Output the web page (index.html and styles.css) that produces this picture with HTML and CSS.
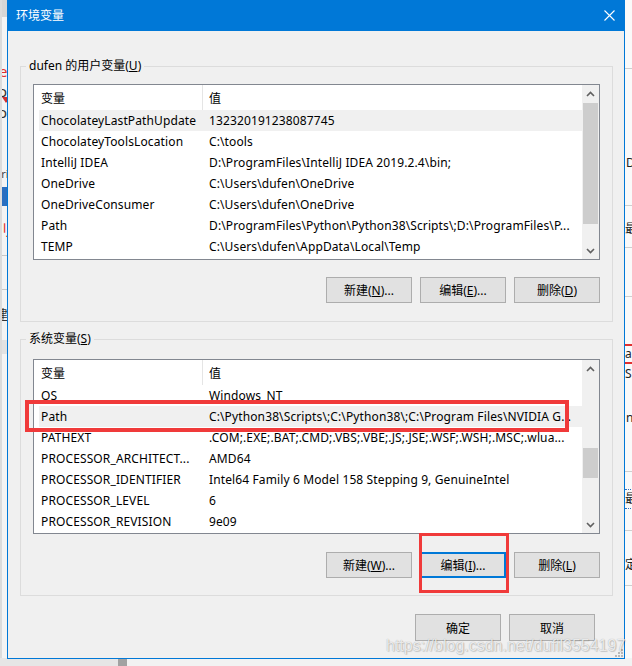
FILE: index.html
```html
<!DOCTYPE html>
<html lang="zh-CN">
<head>
<meta charset="utf-8">
<title>环境变量</title>
<link rel="stylesheet" href="styles.css">
</head>
<body>
<div class="desktop">
  <div class="bg-left">
    <span class="bl bl-top"></span>
    <span class="bl bl-e">e</span>
    <span class="bl bl-o1">o</span>
    <span class="bl bl-tri"></span>
    <span class="bl bl-o2">o</span>
    <span class="bl bl-cri">cri</span>
    <span class="bl bl-blue"></span>
    <span class="bl bl-red">刂</span>
    <span class="bl bl-line1"></span>
    <span class="bl bl-line2"></span>
    <span class="bl bl-jian">建</span>
    <span class="bl bl-line3"></span>
  </div>
  <div class="bg-right">
    <span class="br br-line br-l1"></span>
    <span class="br br-d">D</span>
    <span class="br br-line br-l2"></span>
    <span class="br br-zui">最</span>
    <span class="br br-line br-l3"></span>
    <span class="br br-line br-l4"></span>
    <span class="br br-redline"></span>
    <span class="br br-a">a</span>
    <span class="br br-redline br-redline2"></span>
    <span class="br br-sf">SF</span>
    <span class="br br-n">n</span>
    <span class="br br-line br-l5"></span>
    <span class="br br-zui2">最</span>
    <span class="br br-line br-l6"></span>
    <span class="br br-ding">定</span>
    <span class="br br-line br-l7"></span>
  </div>
  <div class="bg-bottom">
    <span class="bb-a"></span><span class="bb-b"></span><span class="bb-c"></span>
  </div>

  <div class="dialog">
    <div class="titlebar">
      <span class="title">环境变量</span>
      <svg class="close" width="11" height="11" viewBox="0 0 11 11"><path d="M0.5 0.5 L10.5 10.5 M10.5 0.5 L0.5 10.5" stroke="#fff" stroke-width="1.1" fill="none"/></svg>
    </div>
    <div class="dlg-body">
      <div class="group group-user">
        <span class="legend">dufen 的用户变量(<u>U</u>)</span>
        <div class="listview">
          <div class="lv-main">
            <div class="lv-header"><div class="hcell hname">变量</div><div class="hcell hval">值</div></div>
            <div class="lv-rows">
              <div class="row selected"><span class="cname">ChocolateyLastPathUpdate</span><span class="cval">132320191238087745</span></div>
              <div class="row"><span class="cname">ChocolateyToolsLocation</span><span class="cval">C:\tools</span></div>
              <div class="row"><span class="cname">IntelliJ IDEA</span><span class="cval">D:\ProgramFiles\IntelliJ IDEA 2019.2.4\bin;</span></div>
              <div class="row"><span class="cname">OneDrive</span><span class="cval">C:\Users\dufen\OneDrive</span></div>
              <div class="row"><span class="cname">OneDriveConsumer</span><span class="cval">C:\Users\dufen\OneDrive</span></div>
              <div class="row"><span class="cname">Path</span><span class="cval">D:\ProgramFiles\Python\Python38\Scripts\;D:\ProgramFiles\P...</span></div>
              <div class="row"><span class="cname">TEMP</span><span class="cval">C:\Users\dufen\AppData\Local\Temp</span></div>
            </div>
          </div>
          <div class="scrollbar">
            <div class="sb-btn"><svg width="9" height="6" viewBox="0 0 9 6"><path d="M1 5 L4.5 1.5 L8 5" stroke="#606060" stroke-width="1.6" fill="none"/></svg></div>
            <div class="sb-track"><div class="sb-thumb thumb-user"></div></div>
            <div class="sb-btn"><svg width="9" height="6" viewBox="0 0 9 6"><path d="M1 1 L4.5 4.5 L8 1" stroke="#606060" stroke-width="1.6" fill="none"/></svg></div>
          </div>
        </div>
        <div class="btn-row">
          <button class="btn">新建(<u>N</u>)...</button>
          <button class="btn">编辑(<u>E</u>)...</button>
          <button class="btn">删除(<u>D</u>)</button>
        </div>
      </div>

      <div class="group group-sys">
        <span class="legend">系统变量(<u>S</u>)</span>
        <div class="listview listview-sys">
          <div class="lv-main">
            <div class="lv-header"><div class="hcell hname">变量</div><div class="hcell hval">值</div></div>
            <div class="lv-rows">
              <div class="row"><span class="cname">OS</span><span class="cval">Windows_NT</span></div>
              <div class="row selected"><span class="cname">Path</span><span class="cval">C:\Python38\Scripts\;C:\Python38\;C:\Program Files\NVIDIA G...</span></div>
              <div class="row"><span class="cname">PATHEXT</span><span class="cval">.COM;.EXE;.BAT;.CMD;.VBS;.VBE;.JS;.JSE;.WSF;.WSH;.MSC;.wlua...</span></div>
              <div class="row"><span class="cname">PROCESSOR_ARCHITECT...</span><span class="cval">AMD64</span></div>
              <div class="row"><span class="cname">PROCESSOR_IDENTIFIER</span><span class="cval">Intel64 Family 6 Model 158 Stepping 9, GenuineIntel</span></div>
              <div class="row"><span class="cname">PROCESSOR_LEVEL</span><span class="cval">6</span></div>
              <div class="row"><span class="cname">PROCESSOR_REVISION</span><span class="cval">9e09</span></div>
            </div>
          </div>
          <div class="scrollbar">
            <div class="sb-btn"><svg width="9" height="6" viewBox="0 0 9 6"><path d="M1 5 L4.5 1.5 L8 5" stroke="#606060" stroke-width="1.6" fill="none"/></svg></div>
            <div class="sb-track"><div class="sb-thumb thumb-sys"></div></div>
            <div class="sb-btn"><svg width="9" height="6" viewBox="0 0 9 6"><path d="M1 1 L4.5 4.5 L8 1" stroke="#606060" stroke-width="1.6" fill="none"/></svg></div>
          </div>
        </div>
        <div class="btn-row btn-row-sys">
          <button class="btn">新建(<u>W</u>)...</button>
          <button class="btn btn-focus">编辑(<u>I</u>)...</button>
          <button class="btn">删除(<u>L</u>)</button>
        </div>
      </div>

      <div class="dlg-actions">
        <button class="btn btn-tall">确定</button>
        <button class="btn btn-tall">取消</button>
      </div>
    </div>
    <div class="mark mark-path"></div>
    <div class="mark mark-edit"></div>
    <svg class="grip" width="10" height="10" viewBox="0 0 10 10">
      <rect x="8" y="2" width="2" height="2" fill="#b8b8b8"/>
      <rect x="5" y="5" width="2" height="2" fill="#b8b8b8"/>
      <rect x="8" y="5" width="2" height="2" fill="#b8b8b8"/>
      <rect x="2" y="8" width="2" height="2" fill="#b8b8b8"/>
      <rect x="5" y="8" width="2" height="2" fill="#b8b8b8"/>
      <rect x="8" y="8" width="2" height="2" fill="#b8b8b8"/>
    </svg>
  </div>
  <div class="watermark">https://blog.csdn.net/dufil3554197</div>
</div>
</body>
</html>
```

FILE: styles.css
```css
* { box-sizing: border-box; margin: 0; padding: 0; }
html, body { width: 632px; height: 666px; overflow: hidden; }
body {
  background: #f0f0f0;
  font-family: "Noto Sans", "Noto Sans CJK SC", sans-serif;
  font-size: 12px;
  color: #000;
}
.desktop { position: relative; width: 632px; height: 666px; overflow: hidden; background: #f0f0f0; }

/* background windows */
.bg-left { position: absolute; left: 0; top: 0; width: 7px; height: 666px; background: #f4f4f4; border-left: 2px solid #dcdcdc; overflow: hidden; }
.bl { position: absolute; display: block; line-height: 16px; font-size: 15px; }
.bl-top { left: -2px; top: 0; width: 9px; height: 17px; background: #d6d6d6; }
.bl-e { left: -3px; top: 63px; color: #e03030; }
.bl-o1 { left: -4px; top: 83px; color: #333; }
.bl-tri { left: 0; top: 97px; width: 0; height: 0; border-left: 4px solid transparent; border-right: 4px solid transparent; border-top: 6px solid #d03030; }
.bl-o2 { left: -4px; top: 104px; color: #333; }
.bl-cri { left: -6px; top: 166px; color: #444; font-size: 11px; }
.bl-blue { left: -2px; top: 187px; width: 9px; height: 19px; background: #2b6fc0; }
.bl-red { left: -6px; top: 221px; color: #e03030; font-size: 16px; }
.bl-line1 { left: -2px; top: 255px; width: 9px; height: 1px; background: #c8c8c8; }
.bl-line2 { left: -2px; top: 289px; width: 9px; height: 1px; background: #c8c8c8; }
.bl-jian { left: -7px; top: 306px; color: #333; font-size: 13px; }
.bl-line3 { left: -2px; top: 340px; width: 9px; height: 14px; background: #e2e2e2; }

.bg-right { position: absolute; left: 625px; top: 0; width: 7px; height: 666px; background: #fafafa; overflow: hidden; }
.br { position: absolute; display: block; line-height: 14px; font-size: 12px; color: #222; }
.br-line { left: 0; width: 7px; height: 1px; background: #cfcfcf; }
.br-l1 { top: 68px; }
.br-d { left: 1px; top: 156px; }
.br-l2 { top: 205px; }
.br-zui { left: 0; top: 222px; }
.br-l3 { top: 247px; }
.br-l4 { top: 296px; }
.br-redline { left: 0; top: 344px; width: 7px; height: 2px; background: #e03030; }
.br-a { left: 0; top: 347px; }
.br-redline2 { top: 362px; }
.br-sf { left: 0; top: 367px; }
.br-n { left: 1px; top: 411px; }
.br-l5 { top: 471px; }
.br-zui2 { left: 0; top: 489px; padding: 2px 0; border-top: 1px dotted #2b6fc0; border-bottom: 1px dotted #2b6fc0; }
.br-l6 { top: 530px; }
.br-ding { left: 0; top: 558px; }
.br-l7 { top: 585px; }

.bg-bottom { position: absolute; left: 0; bottom: 0; width: 632px; height: 8px; display: flex; }
.bb-a { width: 118px; background: #e6e6e6; }
.bb-b { width: 9px; background: #a2a2a2; }
.bb-c { flex: 1; background: #f2f2f2; }

/* dialog window */
.dialog {
  position: absolute; left: 7px; top: 0;
  width: 618px; height: 659px;
  border: 1px solid #0078d7; border-top: 0;
  background: #f0f0f0;
  display: flex; flex-direction: column;
}
.titlebar {
  height: 31px; flex: none;
  background: #0078d7; color: #fff;
  display: flex; align-items: center; justify-content: space-between;
  padding: 0 9px 0 8px;
}
.title { font-size: 12px; line-height: 16px; }
.close { display: block; }

.dlg-body { flex: 1; padding: 35px 11px 0 12px; }

.group { position: relative; border: 1px solid #dcdcdc; padding: 17px 12px 18px; }
.group-sys { margin-top: 17px; padding-top: 19px; padding-bottom: 17px; }
.legend {
  position: absolute; top: -9px; left: 5px;
  padding: 0 3px; background: #f0f0f0;
  line-height: 16px; white-space: nowrap;
}

.listview { display: flex; height: 176px; border: 1px solid #828790; background: #fff; }
.listview-sys { height: 175px; }
.lv-main { flex: 1; min-width: 0; overflow: hidden; }
.lv-header { display: flex; height: 25px; }
.hcell { display: flex; align-items: center; height: 100%; }
.hname { width: 169px; padding-left: 7px; border-right: 1px solid #e5e5e5; }
.hval { padding-left: 6px; }
.lv-rows { padding-left: 5px; }
.row { display: flex; height: 21px; line-height: 21px; white-space: nowrap; letter-spacing: 0.12px; }
.row.selected { background: #f0f0f0; }
.cname { width: 163px; flex: none; padding-left: 2px; overflow: hidden; }
.cval { padding-left: 7px; overflow: hidden; }

.scrollbar { width: 17px; flex: none; background: #f0f0f0; display: flex; flex-direction: column; }
.sb-btn { height: 17px; flex: none; display: flex; align-items: center; justify-content: center; }
.sb-btn svg { display: block; }
.sb-track { flex: 1; padding: 0 1px; }
.sb-thumb { background: #cdcdcd; }
.thumb-user { margin-top: 1px; height: 121px; }
.thumb-sys { margin-top: 71px; height: 30px; }

.btn-row { display: flex; justify-content: flex-end; gap: 8px; margin-top: 17px; }
.btn-row-sys { margin-top: 18px; }
.btn {
  width: 86px; height: 26px;
  border: 1px solid #adadad; background: #e1e1e1;
  font: inherit; color: #000;
  display: flex; align-items: center; justify-content: center;
}
.btn-focus { border: 2px solid #0078d7; }
.btn-tall { height: 27px; }
.btn u { text-underline-offset: 1px; }

.dlg-actions { display: flex; justify-content: flex-end; gap: 8px; margin-top: 18px; padding-right: 18px; }

/* annotations over the dialog */
.mark { position: absolute; border: 4px solid #f03a3a; }
.mark-path { left: 17px; top: 400px; width: 544px; height: 32px; }
.mark-edit { left: 411px; top: 533px; width: 90px; height: 60px; border-width: 3px; }
.grip { position: absolute; right: 1px; bottom: 1px; }

.watermark {
  position: absolute; left: 386px; top: 637px;
  font-family: "Liberation Sans", Arial, sans-serif; font-size: 16px; line-height: 18px;
  color: rgba(255, 255, 255, 0.8);
  text-shadow: 0 0 1px rgba(0, 0, 0, 0.35), 1px 1px 1px rgba(0, 0, 0, 0.15);
  white-space: nowrap;
}
```
